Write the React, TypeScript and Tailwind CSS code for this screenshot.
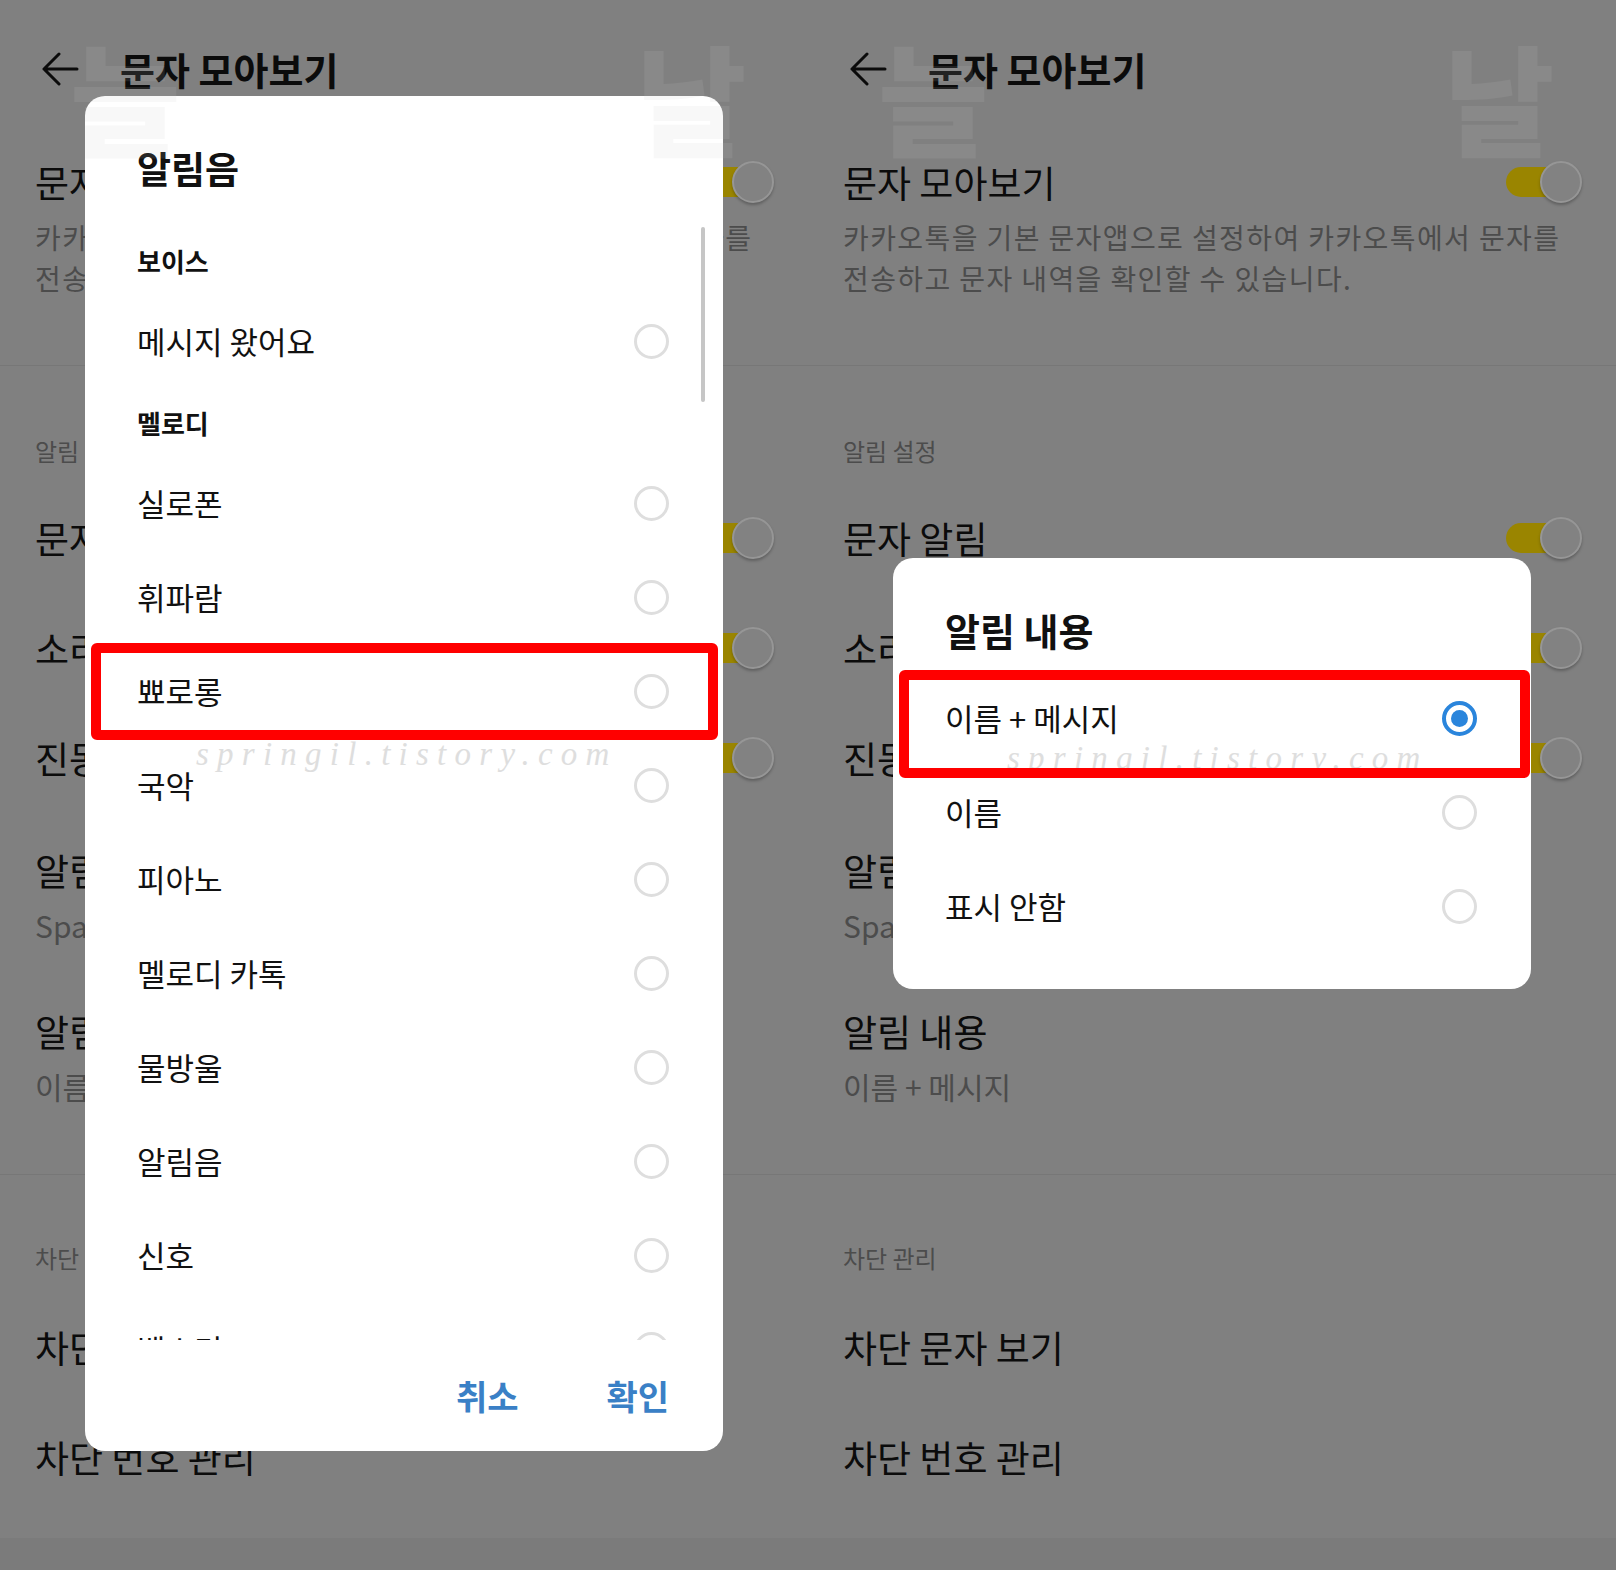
import type { ReactNode } from "react";

function BackArrow() {
  return (
    <svg width="38" height="34" viewBox="0 0 38 34" fill="none">
      <path d="M36 17H3M18 2L3 17l15 15" stroke="#0b0b0b" strokeWidth="3" strokeLinecap="round" strokeLinejoin="round" />
    </svg>
  );
}

function Toggle() {
  return (
    <div className="relative h-[42px] w-[76px] shrink-0">
      <div className="absolute left-0 top-[6px] h-[30px] w-[66px] rounded-full bg-[#9a8500]" />
      <div className="absolute right-0 top-0 h-[42px] w-[42px] rounded-full border-2 border-[#969696] bg-[#828282] shadow-[0_2px_3px_rgba(0,0,0,0.25)]" />
    </div>
  );
}

function Radio({ checked = false }: { checked?: boolean }) {
  if (checked) {
    return (
      <div className="flex h-[35px] w-[35px] shrink-0 items-center justify-center rounded-full border-[4px] border-[#2a85dc]">
        <div className="h-[17px] w-[17px] rounded-full bg-[#2a85dc]" />
      </div>
    );
  }
  return <div className="h-[35px] w-[35px] shrink-0 rounded-full border-[3px] border-[#dedede]" />;
}

function ToggleRow({ label }: { label: string }) {
  return (
    <div className="flex h-[110px] items-center justify-between pl-[35px] pr-[34px]">
      <span className="text-[37px] leading-[50px] text-[#0b0b0b]">{label}</span>
      <Toggle />
    </div>
  );
}

function SubRow({ label, sub }: { label: string; sub: string }) {
  return (
    <div className="pl-[35px] pr-[34px] pt-[32px] pb-[29px]">
      <div className="h-[50px] text-[37px] leading-[50px] text-[#0b0b0b]">{label}</div>
      <div className="mt-[10px] h-[40px] text-[30px] leading-[40px] text-[#4c4c4c]">{sub}</div>
    </div>
  );
}

function PlainRow({ label }: { label: string }) {
  return (
    <div className="flex h-[110px] items-center pl-[35px]">
      <span className="text-[37px] leading-[50px] text-[#0b0b0b]">{label}</span>
    </div>
  );
}

function SectionLabel({ label, className }: { label: string; className: string }) {
  return (
    <div className={className}>
      <div className="h-[30px] pl-[35px] text-[24px] leading-[30px] text-[#4c4c4c]">{label}</div>
    </div>
  );
}

function Watermark({ className }: { className: string }) {
  return (
    <div
      className={`pointer-events-none absolute whitespace-nowrap font-['Liberation_Serif',serif] text-[33px] italic leading-[40px] tracking-[0.25em] text-[#dedede] ${className}`}
    >
      springil.tistory.com
    </div>
  );
}

function Phone({ children }: { children: ReactNode }) {
  return (
    <div className="relative flex h-[1570px] w-[808px] flex-col overflow-hidden bg-[#808080]">
      <header className="flex h-[138px] shrink-0 items-center">
        <div className="ml-[41px] flex">
          <BackArrow />
        </div>
        <h1 className="ml-[41px] text-[38px] font-bold leading-[50px] text-[#0b0b0b]">문자 모아보기</h1>
      </header>

      <div className="pl-[35px] pr-[34px] pt-[19px] pb-[66px]">
        <div className="flex h-[50px] items-center justify-between">
          <span className="text-[37px] leading-[50px] text-[#0b0b0b]">문자 모아보기</span>
          <Toggle />
        </div>
        <p className="mt-[10px] w-[725px] text-[28px] leading-[41px] tracking-[0.05em] text-[#4c4c4c]">
          카카오톡을 기본 문자앱으로 설정하여 카카오톡에서 문자를 전송하고 문자 내역을 확인할 수 있습니다.
        </p>
      </div>

      <div className="h-px bg-[#777777]" />

      <SectionLabel label="알림 설정" className="mt-[70px]" />
      <div className="mt-[17px]">
        <ToggleRow label="문자 알림" />
        <ToggleRow label="소리" />
        <ToggleRow label="진동" />
        <SubRow label="알림음" sub="Sparkle" />
        <SubRow label="알림 내용" sub="이름 + 메시지" />
      </div>

      <div className="mt-[39px] h-px bg-[#777777]" />

      <SectionLabel label="차단 관리" className="mt-[68px]" />
      <div className="mt-[19px]">
        <PlainRow label="차단 문자 보기" />
        <PlainRow label="차단 번호 관리" />
      </div>

      <div className="mt-auto h-[32px] bg-[#7b7b7b]" />

      {children}

      <div className="pointer-events-none absolute left-[70px] top-[36px] z-20 text-[120px] font-black leading-none text-[#c8c8c8] opacity-[0.12]">
        늘
      </div>
      <div className="pointer-events-none absolute left-[636px] top-[36px] z-20 text-[120px] font-black leading-none text-[#c8c8c8] opacity-[0.12]">
        날
      </div>
    </div>
  );
}

const sounds = [
  { type: "header", label: "보이스" },
  { type: "item", label: "메시지 왔어요" },
  { type: "header", label: "멜로디" },
  { type: "item", label: "실로폰" },
  { type: "item", label: "휘파람" },
  { type: "item", label: "뾰로롱" },
  { type: "item", label: "국악" },
  { type: "item", label: "피아노" },
  { type: "item", label: "멜로디 카톡" },
  { type: "item", label: "물방울" },
  { type: "item", label: "알림음" },
  { type: "item", label: "신호" },
  { type: "item", label: "벨소리" },
];

function SoundDialog() {
  return (
    <div className="absolute left-[85px] top-[96px] z-10 flex h-[1355px] w-[638px] flex-col rounded-[20px] bg-white pl-[52px] pr-[54px] pt-[47px]">
      <h2 className="h-[50px] text-[37px] font-bold leading-[50px] text-[#111111]">알림음</h2>
      <div className="mt-[33px] h-[1114px] overflow-hidden">
        {sounds.map((s, i) =>
          s.type === "header" ? (
            <div key={i} className="flex h-[68px] items-center text-[26px] font-bold text-[#111111]">
              {s.label}
            </div>
          ) : (
            <div key={i} className="flex h-[94px] shrink-0 items-center justify-between">
              <span className="text-[31px] leading-[40px] text-[#111111]">{s.label}</span>
              <Radio />
            </div>
          )
        )}
      </div>
      <div className="mt-[30px] flex h-[50px] items-center justify-end gap-[88px] text-[34px] font-bold text-[#3a80c6]">
        <span>취소</span>
        <span>확인</span>
      </div>

      <div className="absolute right-[18px] top-[131px] h-[175px] w-[4px] rounded-full bg-[#c6c6c6]" />
      <Watermark className="left-[111px] top-[638px]" />
      <div className="absolute left-[6px] right-[5px] top-[547px] h-[97px] rounded-[6px] border-[10px] border-[#ff0000]" />
    </div>
  );
}

function ContentDialog() {
  const options = [
    { label: "이름 + 메시지", checked: true },
    { label: "이름", checked: false },
    { label: "표시 안함", checked: false },
  ];
  return (
    <div className="absolute left-[85px] top-[558px] z-10 h-[431px] w-[638px] rounded-[20px] bg-white pl-[52px] pr-[54px] pt-[47px]">
      <h2 className="h-[50px] text-[38px] font-bold leading-[50px] text-[#111111]">알림 내용</h2>
      <div className="mt-[16px]">
        {options.map((o) => (
          <div key={o.label} className="flex h-[94px] items-center justify-between">
            <span className="text-[31px] leading-[40px] text-[#111111]">{o.label}</span>
            <Radio checked={o.checked} />
          </div>
        ))}
      </div>
      <Watermark className="left-[114px] top-[180px]" />
      <div className="absolute left-[6px] right-[1px] top-[112px] h-[108px] rounded-[6px] border-[10px] border-[#ff0000]" />
    </div>
  );
}

export default function App() {
  return (
    <div className="flex h-[1570px] w-[1616px] font-['Noto_Sans_CJK_KR',sans-serif]">
      <Phone>
        <SoundDialog />
      </Phone>
      <Phone>
        <ContentDialog />
      </Phone>
    </div>
  );
}
